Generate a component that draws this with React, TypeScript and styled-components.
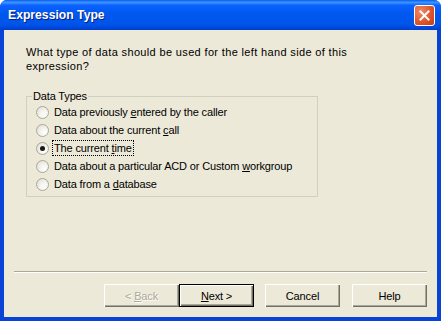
import styled, { createGlobalStyle } from "styled-components";
import { useState } from "react";

const GlobalStyle = createGlobalStyle`
  html, body {
    margin: 0;
    padding: 0;
    background: #ffffff;
  }
  body {
    font-family: "Liberation Sans", Arial, sans-serif;
    font-size: 11px;
    letter-spacing: -0.15px;
  }
`;

const Window = styled.div`
  width: 441px;
  height: 321px;
  display: flex;
  flex-direction: column;
  box-sizing: border-box;
  border-radius: 7px 7px 0 0;
  overflow: hidden;
  background: #0842d6;
`;

const TitleBar = styled.div`
  height: 30px;
  flex: none;
  display: flex;
  align-items: center;
  justify-content: space-between;
  padding: 0 6px 0 8px;
  background: linear-gradient(
    to bottom,
    #0a5cf0 0%,
    #3d95ff 8%,
    #0b61ff 18%,
    #0058ee 45%,
    #0055ea 80%,
    #0048dc 92%,
    #003fc9 100%
  );
`;

const Title = styled.span`
  font-family: "Liberation Sans", Arial, sans-serif;
  font-weight: bold;
  font-size: 12.2px;
  letter-spacing: 0;
  color: #ffffff;
  text-shadow: 1px 1px 0 #0a1e80;
`;

const CloseButton = styled.div`
  width: 19px;
  height: 19px;
  border: 1px solid #ffffff;
  border-radius: 3px;
  background: radial-gradient(circle at 30% 30%, #f08a6a 0%, #e0562c 55%, #c43c15 100%);
  display: flex;
  align-items: center;
  justify-content: center;
`;

const Frame = styled.div`
  flex: 1;
  display: flex;
  flex-direction: column;
  margin: 0 4px 4px 4px;
  background: #ece9d8;
  padding: 15px 10px 10px 10px;
`;

const Question = styled.p`
  margin: 0 0 16px 12px;
  line-height: 14px;
  letter-spacing: 0.35px;
  color: #000000;
  width: 372px;
`;

const GroupBox = styled.fieldset`
  margin: 0 0 0 12px;
  width: 292px;
  box-sizing: border-box;
  border: 1px solid #d0d0bf;
  padding: 0 0 3px 0;
  min-width: 0;
`;

const Legend = styled.legend`
  padding: 0 1px;
  margin-left: 5px;
  line-height: 14px;
  color: #000000;
`;

const OptionRow = styled.label`
  display: flex;
  align-items: center;
  height: 18px;
  padding-left: 9px;
  gap: 4px;
  color: #000000;
  white-space: nowrap;
  cursor: default;
`;

const RadioCircle = styled.span<{ $checked: boolean }>`
  width: 13px;
  height: 13px;
  box-sizing: border-box;
  border-radius: 50%;
  border: 1px solid #aca899;
  background: radial-gradient(circle at 70% 70%, #ffffff 0%, #f4f3ee 40%, #dcd9cd 100%);
  display: flex;
  align-items: center;
  justify-content: center;
  flex: none;

  &::after {
    content: "";
    display: ${({ $checked }) => ($checked ? "block" : "none")};
    width: 5px;
    height: 5px;
    border-radius: 50%;
    background: #1a1a1a;
  }
`;

const OptionText = styled.span<{ $focused: boolean }>`
  padding: 0 1px;
  line-height: 14px;
  outline: ${({ $focused }) => ($focused ? "1px dotted #000" : "none")};
  outline-offset: 0;
`;

const U = styled.span`
  text-decoration: underline;
`;

const Separator = styled.div`
  margin-top: auto;
  height: 0;
  border-top: 1px solid #aca899;
  border-bottom: 1px solid #ffffff;
`;

const ButtonRow = styled.div`
  display: flex;
  justify-content: flex-end;
  margin-top: 11px;
`;

const Button = styled.div<{ $default?: boolean; $disabled?: boolean; $gap?: number }>`
  width: 75px;
  height: 23px;
  box-sizing: border-box;
  margin-left: ${({ $gap }) => $gap ?? 0}px;
  display: flex;
  align-items: center;
  justify-content: center;
  white-space: pre;
  background: #ece9d8;
  color: ${({ $disabled }) => ($disabled ? "#aca899" : "#000000")};
  border: ${({ $default }) => ($default ? "1px solid #000000" : "none")};
  box-shadow: inset 1px 1px 0 #ffffff, inset -1px -1px 0 #716f64, inset -2px -2px 0 #aca899;
  text-shadow: ${({ $disabled }) => ($disabled ? "1px 1px 0 #ffffff" : "none")};
`;

const options = [
  { key: "prev", label: <>Data previously <U>e</U>ntered by the caller</> },
  { key: "call", label: <>Data about the current <U>c</U>all</> },
  { key: "time", label: <>The current <U>t</U>ime</> },
  { key: "acd", label: <>Data about a particular ACD or Custom <U>w</U>orkgroup</> },
  { key: "db", label: <>Data from a <U>d</U>atabase</> },
];

export default function App() {
  const [selected, setSelected] = useState("time");

  return (
    <>
      <GlobalStyle />
      <Window>
        <TitleBar>
          <Title>Expression Type</Title>
          <CloseButton>
            <svg width="11" height="11" viewBox="0 0 11 11">
              <path d="M1.5 1.5 L9.5 9.5 M9.5 1.5 L1.5 9.5" stroke="#fff" strokeWidth="2" strokeLinecap="square" />
            </svg>
          </CloseButton>
        </TitleBar>
        <Frame>
          <Question>
            What type of data should be used for the left hand side of this expression?
          </Question>
          <GroupBox>
            <Legend>Data Types</Legend>
            {options.map((o) => (
              <OptionRow key={o.key} onClick={() => setSelected(o.key)}>
                <RadioCircle $checked={selected === o.key} />
                <OptionText $focused={selected === o.key}>{o.label}</OptionText>
              </OptionRow>
            ))}
          </GroupBox>
          <Separator />
          <ButtonRow>
            <Button $disabled>
              <span>
                &lt; <U>B</U>ack
              </span>
            </Button>
            <Button $default>
              <span>
                <U>N</U>ext &gt;
              </span>
            </Button>
            <Button $gap={11}>Cancel</Button>
            <Button $gap={12}>Help</Button>
          </ButtonRow>
        </Frame>
      </Window>
    </>
  );
}
